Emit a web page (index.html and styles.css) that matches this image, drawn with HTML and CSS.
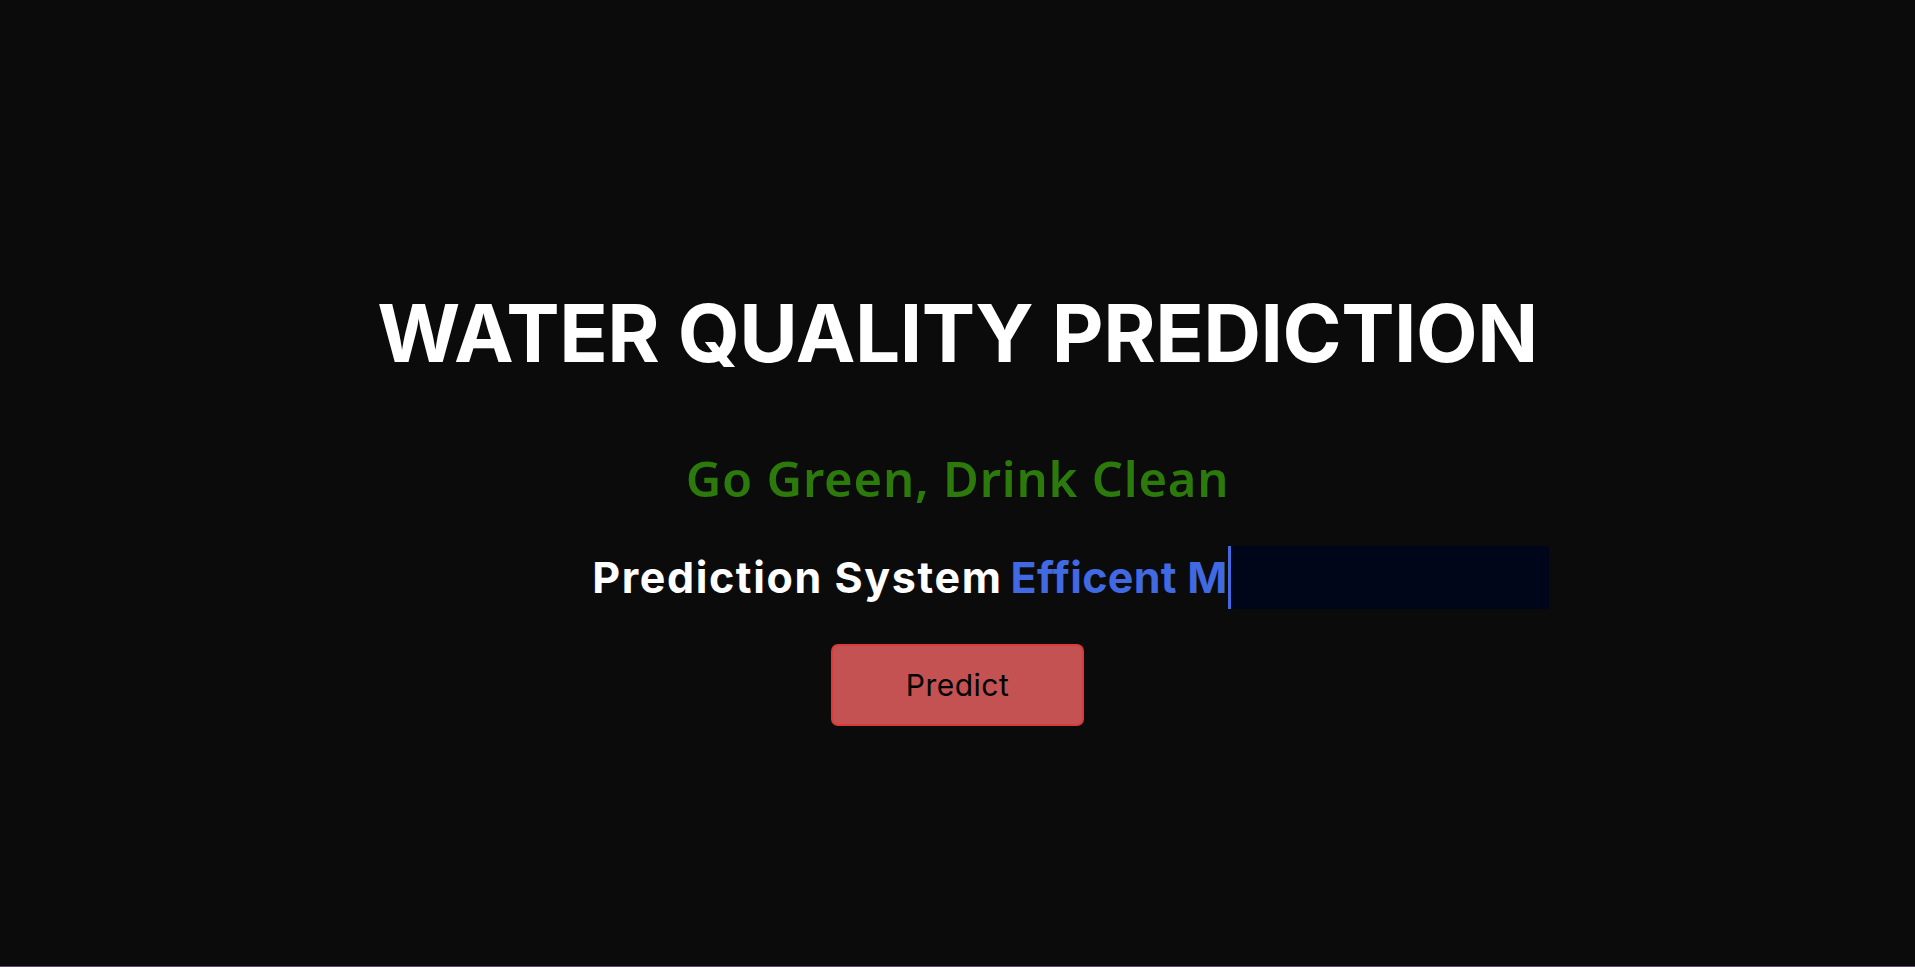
FILE: index.html
```html
<!DOCTYPE html>
<html lang="en">
<head>
<meta charset="utf-8">
<title>Water Quality Prediction</title>
<link rel="stylesheet" href="styles.css">
</head>
<body>
<main class="hero">
  <h1 class="title">WATER QUALITY PREDICTION</h1>
  <p class="slogan">Go Green, Drink Clean</p>
  <div class="typing-row">
    <span class="label">Prediction System</span>
    <span class="typed">Efficent M</span>
    <span class="caret-box"></span>
  </div>
  <button class="predict-btn" type="button">Predict</button>
</main>
</body>
</html>
```

FILE: styles.css
```css
html, body {
  margin: 0;
  padding: 0;
}
body {
  background: #0b0b0b;
  min-height: 966px;
  border-bottom: 1px solid #5b4a6b;
  font-family: Inter, "Open Sans", sans-serif;
}
.hero {
  display: flex;
  flex-direction: column;
  align-items: center;
  padding-top: 293px;
}
.title {
  margin: 0;
  color: #ffffff;
  font-family: Inter, sans-serif;
  font-weight: 700;
  font-size: 80px;
  line-height: 80px;
  letter-spacing: -0.5px;
}
.slogan {
  margin: 81px 0 0;
  color: #2b7a0b;
  font-family: "Noto Sans", sans-serif;
  font-weight: 600;
  font-size: 49px;
  line-height: 48px;
  letter-spacing: 0.8px;
}
.typing-row {
  margin-top: 44px;
  display: flex;
  align-items: center;
  height: 63px;
  padding-left: 226px;
  font-family: Inter, sans-serif;
  font-weight: 700;
  font-size: 43px;
  line-height: 43px;
}
.label {
  color: #ffffff;
  margin-right: 8px;
  letter-spacing: 1.6px;
}
.typed {
  color: #4169e1;
  letter-spacing: 0.3px;
}
.caret-box {
  align-self: stretch;
  width: 318px;
  background: #00061a;
  border-left: 3px solid #4169e1;
}
.predict-btn {
  margin-top: 35px;
  width: 253px;
  height: 82px;
  background: #c55252;
  border: 2px solid #d93a3a;
  border-radius: 7px;
  color: #000000;
  font-family: Inter, sans-serif;
  font-weight: 400;
  font-size: 30px;
  letter-spacing: 0.5px;
  padding: 0;
}
```
